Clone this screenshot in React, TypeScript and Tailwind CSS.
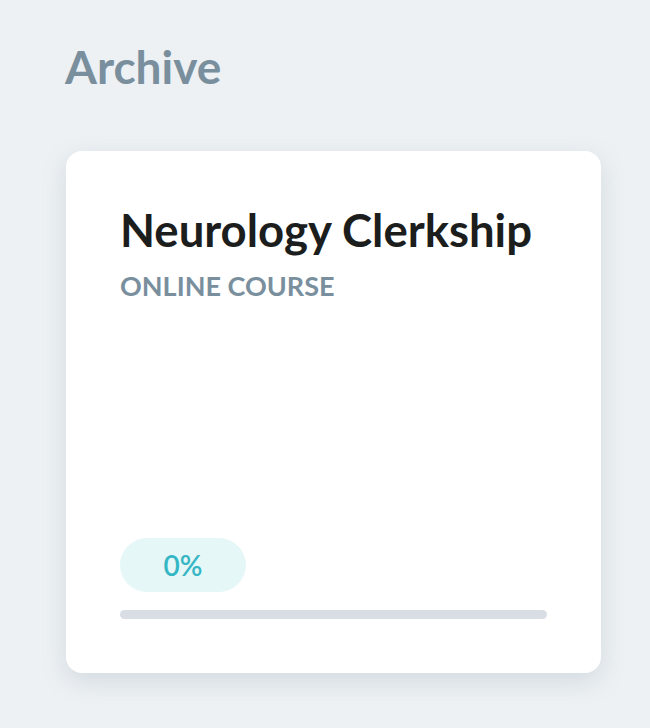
export default function App() {
  return (
    <div
      className="min-h-[728px] bg-[#edf1f4] px-[66px] pt-[37px] pb-[56px]"
      style={{ fontFamily: "Lato, 'Noto Sans', sans-serif" }}
    >
      <h1 className="ml-[-1px] text-[46px] font-bold leading-[60px] text-[#7a8f9d]">Archive</h1>

      <div className="mt-[54px] w-[535px] rounded-2xl bg-white px-[54px] pt-[51px] pb-[54px] shadow-[0_8px_24px_rgba(120,135,150,0.22)]">
        <h2 className="text-[45.5px] font-bold leading-[56px] text-[#1c1d1d]">Neurology Clerkship</h2>
        <p className="mt-[12px] text-[27px] font-bold leading-[32px] text-[#7a8f9d]">ONLINE COURSE</p>

        <div className="mt-[236px] flex h-[54px] w-[126px] items-center justify-center rounded-full bg-[#e6f7f8] text-[28px] font-semibold text-[#35b6c4]">
          0%
        </div>
        <div className="mt-[18px] h-[9px] w-full rounded-full bg-[#d9dee5]" />
      </div>
    </div>
  )
}
